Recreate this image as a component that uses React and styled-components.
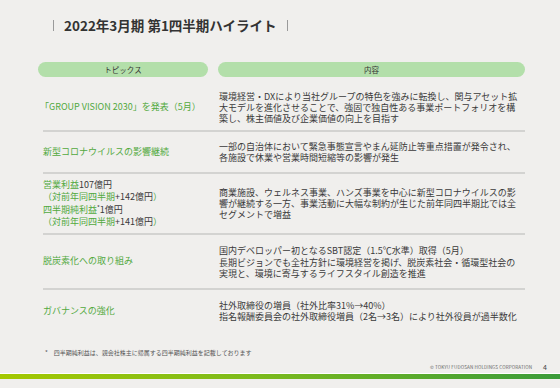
import React from 'react'
import styled, { createGlobalStyle } from 'styled-components'

const GlobalStyle = createGlobalStyle`
  body {
    margin: 0;
    background: #f0efed;
    font-family: "Noto Sans CJK JP", "Noto Sans", sans-serif;
  }
`

const Slide = styled.div`
  width: 560px;
  height: 388px;
  display: flex;
  flex-direction: column;
  background: #f0efed;
  overflow: hidden;
  color: #3a3a3a;
`

const TitleRow = styled.div`
  display: flex;
  align-items: center;
  gap: 10px;
  height: 15px;
  margin: 18px 0 0 53px;
`

const Bar = styled.span`
  width: 1px;
  height: 11px;
  background: #9a9a9a;
`

const Title = styled.h1`
  margin: 0;
  font-size: 13.5px;
  line-height: 15px;
  font-weight: 700;
  color: #333;
`

const Table = styled.div`
  margin: 29px 35px 0 38px;
`

const Head = styled.div`
  display: grid;
  grid-template-columns: 170px 1fr;
  column-gap: 10px;
`

const Pill = styled.div`
  height: 15px;
  border-radius: 8px;
  background: #b3dfaa;
  font-size: 7.5px;
  color: #333;
  display: flex;
  align-items: center;
  justify-content: center;
`

const Row = styled.div`
  display: grid;
  grid-template-columns: 165px 1fr;
  column-gap: 10px;
  align-items: center;
  box-sizing: border-box;
  height: ${p => p.$h}px;
  padding-top: ${p => p.$pt || 0}px;
  margin-left: 5px;
  border-bottom: ${p => (p.$last ? 'none' : '2px solid #d3d3d1')};
`

const Topic = styled.div`
  font-size: 9px;
  line-height: 12.3px;
  color: #52a93e;
  white-space: nowrap;
  margin-left: ${p => p.$pull || 0}px;
`

const Dark = styled.span`
  color: #3a3a3a;
`

const Sup = styled.sup`
  font-size: 6px;
  vertical-align: 3px;
  line-height: 0;
`

const Body = styled.div`
  font-size: 9px;
  line-height: 11px;
  white-space: nowrap;
  padding-left: 1px;
`

const Para = styled.p`
  margin: 0;
  & + & {
    margin-top: 1px;
  }
`

const Note = styled.div`
  display: flex;
  gap: 6px;
  margin: 17px 0 0 45px;
  font-size: 6px;
  line-height: 8px;
  color: #555;
`

const Footer = styled.div`
  display: flex;
  align-items: center;
  justify-content: flex-end;
  gap: 11px;
  height: 6px;
  margin-top: 7px;
  padding-right: 13px;
`

const Copy = styled.span`
  font-size: 4.6px;
  letter-spacing: 0.1px;
  color: #666;
`

const Page = styled.span`
  font-size: 7px;
  color: #444;
`

const Stripe = styled.div`
  margin-top: 3px;
  height: 5px;
  border-top: 1px solid #ffffff;
  background: linear-gradient(90deg, #a4c800 0%, #7dbb1c 45%, #3a9b3a 100%);
`

const rows = [
  {
    h: 55, pt: 8,
    topic: <Topic $pull={-3}>「GROUP VISION 2030」を発表（5月）</Topic>,
    body: [
      ['環境経営・DXにより当社グループの特色を強みに転換し、関与アセット拡', '大モデルを進化させることで、強固で独自性ある事業ポートフォリオを構', '築し、株主価値及び企業価値の向上を目指す'],
    ],
  },
  {
    h: 42,
    topic: <Topic>新型コロナウイルスの影響継続</Topic>,
    body: [
      ['一部の自治体において緊急事態宣言やまん延防止等重点措置が発令され、', '各施設で休業や営業時間短縮等の影響が発生'],
    ],
  },
  {
    h: 61,
    topic: (
      <Topic>
        営業利益<Dark>107億円</Dark><br />
        （対前年同四半期<Dark>+142億円</Dark>）<br />
        四半期純利益<Dark><Sup>*</Sup>1億円</Dark><br />
        （対前年同四半期<Dark>+141億円</Dark>）
      </Topic>
    ),
    body: [
      ['商業施設、ウェルネス事業、ハンズ事業を中心に新型コロナウイルスの影', '響が継続する一方、事業活動に大幅な制約が生じた前年同四半期比では全', 'セグメントで増益'],
    ],
  },
  {
    h: 55,
    topic: <Topic>脱炭素化への取り組み</Topic>,
    body: [
      ['国内デベロッパー初となるSBT認定（1.5℃水準）取得（5月）'],
      ['長期ビジョンでも全社方針に環境経営を掲げ、脱炭素社会・循環型社会の', '実現と、環境に寄与するライフスタイル創造を推進'],
    ],
  },
  {
    h: 42, last: true,
    topic: <Topic>ガバナンスの強化</Topic>,
    body: [
      ['社外取締役の増員（社外比率31%→40%）', '指名報酬委員会の社外取締役増員（2名→3名）により社外役員が過半数化'],
    ],
  },
]

const App = () => {
  return (
    <Slide>
      <GlobalStyle />
      <TitleRow>
        <Bar />
        <Title>2022年3月期 第1四半期ハイライト</Title>
        <Bar />
      </TitleRow>

      <Table>
        <Head>
          <Pill>トピックス</Pill>
          <Pill>内容</Pill>
        </Head>
        {rows.map((r, i) => (
          <Row key={i} $h={r.h} $pt={r.pt} $last={r.last}>
            {r.topic}
            <Body>
              {r.body.map((lines, j) => (
                <Para key={j}>
                  {lines.map((l, k) => (
                    <React.Fragment key={k}>
                      {k > 0 && <br />}
                      {l}
                    </React.Fragment>
                  ))}
                </Para>
              ))}
            </Body>
          </Row>
        ))}
      </Table>

      <Note>
        <span>*</span>
        <span>四半期純利益は、親会社株主に帰属する四半期純利益を記載しております</span>
      </Note>

      <Footer>
        <Copy>© TOKYU FUDOSAN HOLDINGS CORPORATION</Copy>
        <Page>4</Page>
      </Footer>
      <Stripe />
    </Slide>
  )
}

export default App
